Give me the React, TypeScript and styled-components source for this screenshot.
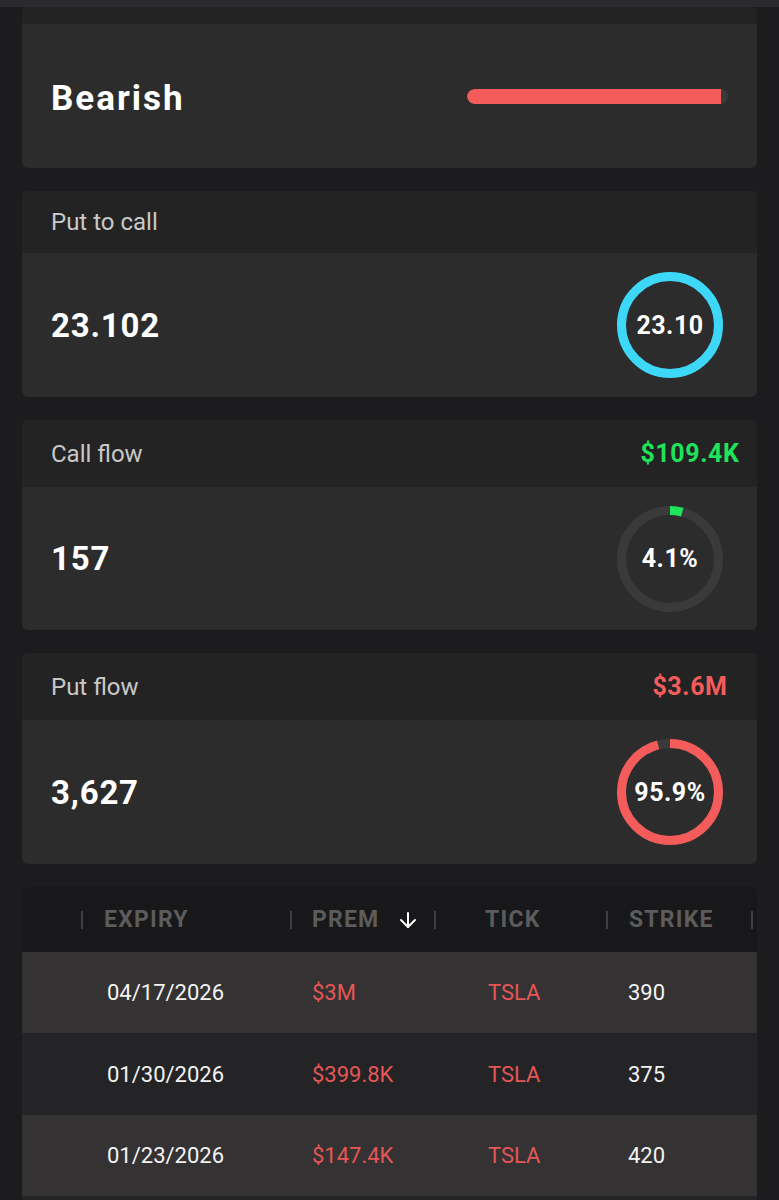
import React from 'react';
import styled, { createGlobalStyle } from 'styled-components';
import { ArrowDown } from 'lucide-react';

const GlobalStyle = createGlobalStyle`
  body {
    margin: 0;
    background: #1c1c1e;
    font-family: Roboto, "Noto Sans", "Liberation Sans", sans-serif;
    color: #ffffff;
  }
`;

const colors = {
  red: '#f45c5c',
  redText: '#e65656',
  green: '#1fe35a',
  cyan: '#3dd8f8',
  track: '#3a3a3a',
};

// Styled components
const TopBar = styled.div`
  height: 7px;
  background: #2b2b2d;
`;

const Stack = styled.div`
  display: flex;
  flex-direction: column;
  gap: 23px;
  padding: 0 22px 20px;
`;

const Card = styled.div`
  background: #2c2c2c;
  border-radius: 6px;
  overflow: hidden;
`;

const CardHeader = styled.div<{ $height: number }>`
  height: ${({ $height }) => $height}px;
  background: #232323;
  display: flex;
  align-items: center;
  justify-content: space-between;
  padding-left: 29px;
`;

const CardLabel = styled.span`
  font-size: 24px;
  color: #c8c8c8;
`;

const HeaderValue = styled.span<{ $color: string }>`
  width: 120px;
  margin-right: 7px;
  text-align: center;
  font-size: 25px;
  font-weight: 700;
  letter-spacing: 0.6px;
  color: ${({ $color }) => $color};
`;

const CardBody = styled.div<{ $height: number }>`
  height: ${({ $height }) => $height}px;
  display: flex;
  align-items: center;
  justify-content: space-between;
  padding: 0 34px 0 29px;
`;

const BigValue = styled.span`
  font-size: 33px;
  font-weight: 700;
  letter-spacing: 0.8px;
`;

const SentimentLabel = styled.span`
  font-size: 35px;
  font-weight: 700;
  letter-spacing: 2px;
  margin-top: 4px;
`;

const Bar = styled.div`
  width: 261px;
  height: 15px;
  margin-right: -5px;
  border-radius: 8px;
  background: ${colors.track};
  overflow: hidden;
`;

const BarFill = styled.div`
  height: 100%;
  background: ${colors.red};
  border-radius: 8px 0 0 8px;
`;

const RingWrap = styled.div`
  position: relative;
  width: 106px;
  height: 106px;
  display: flex;
  align-items: center;
  justify-content: center;
`;

const RingSvg = styled.svg`
  position: absolute;
  inset: 0;
`;

const RingText = styled.span`
  position: relative;
  font-size: 25px;
  font-weight: 700;
  letter-spacing: 0.5px;
`;

const Table = styled.div`
  border-radius: 6px 6px 0 0;
  overflow: hidden;
  background: #242426;
  min-height: 330px;
`;

const Row = styled.div<{ $bg: string; $height: number }>`
  display: grid;
  grid-template-columns: 61px 209px 144px 172px 145px 1fr;
  height: ${({ $height }) => $height}px;
  background: ${({ $bg }) => $bg};
`;

const HeadCell = styled.div<{ $pad: number; $sep?: boolean }>`
  position: relative;
  display: flex;
  align-items: center;
  gap: 17px;
  padding-left: ${({ $pad }) => $pad}px;
  font-size: 23px;
  font-weight: 700;
  letter-spacing: 1.2px;
  color: #5c5c5c;

  &::after {
    content: '';
    display: ${({ $sep }) => ($sep ? 'block' : 'none')};
    position: absolute;
    right: 0;
    top: 50%;
    width: 2px;
    height: 18px;
    margin-top: -9px;
    background: #3f3f3f;
  }
`;

const Cell = styled.div<{ $pad: number; $red?: boolean }>`
  display: flex;
  align-items: center;
  padding-left: ${({ $pad }) => $pad}px;
  font-size: 22px;
  color: ${({ $red }) => ($red ? colors.redText : '#f2f2f2')};
`;

// Ring gauge
const R = 48.5;
const C = 2 * Math.PI * R;

const Ring: React.FC<{ pct: number; color: string; label: string }> = ({ pct, color, label }) => (
  <RingWrap>
    <RingSvg width="106" height="106" viewBox="0 0 106 106">
      <circle cx="53" cy="53" r={R} fill="none" stroke={colors.track} strokeWidth="9" />
      <circle
        cx="53"
        cy="53"
        r={R}
        fill="none"
        stroke={color}
        strokeWidth="9"
        strokeDasharray={`${(pct / 100) * C} ${C}`}
        transform="rotate(-90 53 53)"
      />
    </RingSvg>
    <RingText>{label}</RingText>
  </RingWrap>
);

const flows = [
  { label: 'Put to call', head: 62, body: 144, value: '23.102', ring: 100, ringColor: colors.cyan, ringLabel: '23.10' },
  { label: 'Call flow', head: 67, body: 143, value: '157', ring: 4.1, ringColor: colors.green, ringLabel: '4.1%', premium: '$109.4K', premColor: colors.green },
  { label: 'Put flow', head: 67, body: 144, value: '3,627', ring: 95.9, ringColor: colors.red, ringLabel: '95.9%', premium: '$3.6M', premColor: colors.red },
];

const columns = [
  { label: '', hpad: 0, cpad: 0 },
  { label: 'EXPIRY', hpad: 21, cpad: 24 },
  { label: 'PREM', hpad: 20, cpad: 20 },
  { label: 'TICK', hpad: 49, cpad: 52 },
  { label: 'STRIKE', hpad: 21, cpad: 20 },
];

const trades = [
  { expiry: '04/17/2026', prem: '$3M', tick: 'TSLA', strike: '390' },
  { expiry: '01/30/2026', prem: '$399.8K', tick: 'TSLA', strike: '375' },
  { expiry: '01/23/2026', prem: '$147.4K', tick: 'TSLA', strike: '420' },
];

export default function App() {
  return (
    <>
      <GlobalStyle />
      <TopBar />
      <Stack>
        <Card>
          <CardHeader $height={17} />
          <CardBody $height={144}>
            <SentimentLabel>Bearish</SentimentLabel>
            <Bar>
              <BarFill style={{ width: '97.5%' }} />
            </Bar>
          </CardBody>
        </Card>

        {flows.map((f) => (
          <Card key={f.label}>
            <CardHeader $height={f.head}>
              <CardLabel>{f.label}</CardLabel>
              {f.premium && <HeaderValue $color={f.premColor}>{f.premium}</HeaderValue>}
            </CardHeader>
            <CardBody $height={f.body}>
              <BigValue>{f.value}</BigValue>
              <Ring pct={f.ring} color={f.ringColor} label={f.ringLabel} />
            </CardBody>
          </Card>
        ))}

        <Table>
          <Row $bg="#18181a" $height={65}>
            {columns.map((c) => (
              <HeadCell key={c.label || 'sel'} $pad={c.hpad} $sep>
                {c.label}
                {c.label === 'PREM' && <ArrowDown size={24} color="#ffffff" strokeWidth={2} />}
              </HeadCell>
            ))}
            <HeadCell $pad={0} />
          </Row>
          {trades.map((t, i) => (
            <Row key={t.expiry} $bg={i % 2 === 0 ? '#343233' : '#242426'} $height={i === 1 ? 82 : 81}>
              <Cell $pad={0} />
              <Cell $pad={columns[1].cpad}>{t.expiry}</Cell>
              <Cell $pad={columns[2].cpad} $red>{t.prem}</Cell>
              <Cell $pad={columns[3].cpad} $red>{t.tick}</Cell>
              <Cell $pad={columns[4].cpad}>{t.strike}</Cell>
              <Cell $pad={0} />
            </Row>
          ))}
        </Table>
      </Stack>
    </>
  );
}
